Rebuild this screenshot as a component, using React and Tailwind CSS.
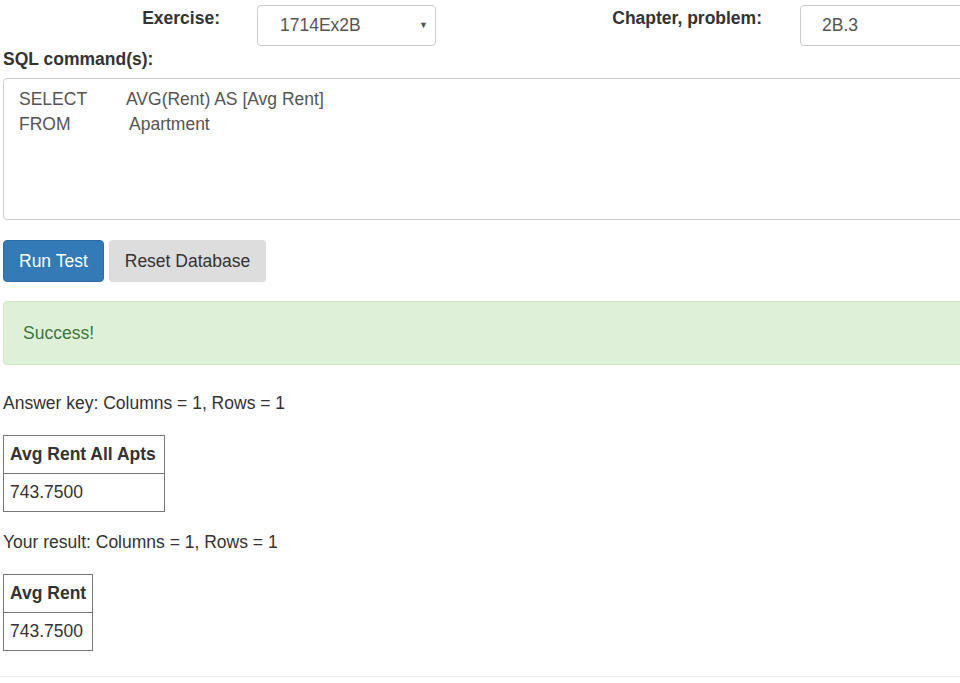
export default function App() {
  const font = { fontFamily: '"Liberation Sans", Arial, sans-serif' };
  return (
    <div className="w-screen h-[683px] overflow-hidden bg-white text-[17.5px] text-[#333]" style={font}>
      <div className="w-[1100px]">
        {/* top row */}
        <div className="flex items-start pt-[5px]">
          <div className="w-[220px] text-right font-bold pt-[2px] leading-[22px]">Exercise:</div>
          <div className="ml-[37px] w-[179px] h-[41px] border border-[#ccc] rounded-[4px] flex items-center justify-between pl-[22px] pr-[7px] text-[#555]">
            <span>1714Ex2B</span>
            <span className="text-[9px] text-[#555]">▼</span>
          </div>
          <div className="w-[326px] text-right font-bold pt-[2px] leading-[22px]">Chapter, problem:</div>
          <div className="ml-[38px] w-[300px] h-[41px] border border-[#ccc] rounded-[4px] flex items-center pl-[21px] text-[#555]">
            2B.3
          </div>
        </div>
        <div className="pl-[3px] mt-[2px] font-bold leading-[22px]">SQL command(s):</div>
        <div className="ml-[3px] mt-[8px] h-[142px] border border-[#ccc] rounded-[4px] pl-[15px] pt-[8px] leading-[25px] text-[#555]">
          <div><span className="inline-block w-[107px]">SELECT</span>AVG(Rent) AS [Avg Rent]</div>
          <div><span className="inline-block w-[110px]">FROM</span>Apartment</div>
        </div>
        <div className="flex gap-[5px] ml-[3px] mt-[20px]">
          <div className="h-[42px] px-[15px] flex items-center rounded-[4px] bg-[#337ab7] border border-[#2e6da4] text-white">Run Test</div>
          <div className="h-[42px] px-[16px] flex items-center rounded-[4px] bg-[#dddddd] text-[#333]">Reset Database</div>
        </div>
        <div className="ml-[3px] mt-[19px] h-[64px] bg-[#dff0d8] border border-[#d6e9c6] rounded-[4px] flex items-center pl-[19px] text-[#3c763d]">
          Success!
        </div>
        <div className="pl-[3px] mt-[27px] leading-[22px]">Answer key: Columns = 1, Rows = 1</div>
        <table className="ml-[3px] mt-[21px] border-collapse">
          <tbody>
            <tr>
              <th className="border border-[#777] h-[38px] pl-[6px] pr-[8px] text-left font-bold">Avg Rent All Apts</th>
            </tr>
            <tr>
              <td className="border border-[#777] h-[38px] pl-[6px] pr-[8px]">743.7500</td>
            </tr>
          </tbody>
        </table>
        <div className="pl-[3px] mt-[19px] leading-[22px]">Your result: Columns = 1, Rows = 1</div>
        <table className="ml-[3px] mt-[21px] border-collapse">
          <tbody>
            <tr>
              <th className="border border-[#777] h-[38px] px-[6px] text-left font-bold">Avg Rent</th>
            </tr>
            <tr>
              <td className="border border-[#777] h-[38px] px-[6px]">743.7500</td>
            </tr>
          </tbody>
        </table>
        <div className="mt-[25px] border-t border-[#eee]"></div>
      </div>
    </div>
  );
}
